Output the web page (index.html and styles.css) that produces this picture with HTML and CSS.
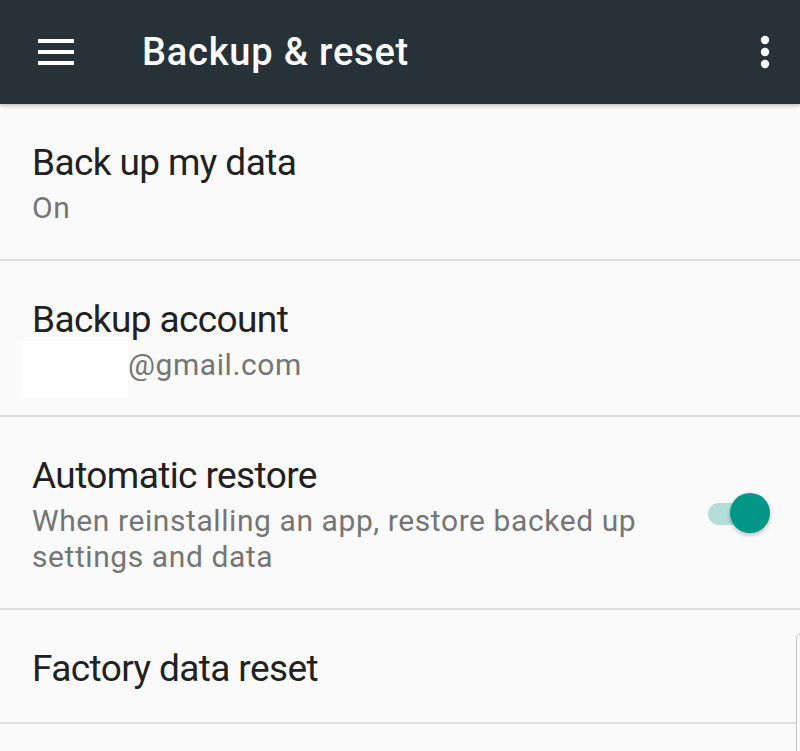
FILE: index.html
```html
<!DOCTYPE html>
<html lang="en">
<head>
<meta charset="utf-8">
<title>Backup &amp; reset</title>
<link rel="stylesheet" href="styles.css">
</head>
<body>
<header class="appbar">
  <svg class="menu" width="36" height="26" viewBox="0 0 36 26" aria-hidden="true">
    <rect x="0" y="0" width="36" height="4" fill="#fff"/>
    <rect x="0" y="11" width="36" height="4" fill="#fff"/>
    <rect x="0" y="22" width="36" height="4" fill="#fff"/>
  </svg>
  <h1 class="title">Backup &amp; reset</h1>
  <svg class="more" width="10" height="34" viewBox="0 0 10 34" aria-hidden="true">
    <circle cx="5" cy="5" r="4.2" fill="#fff"/>
    <circle cx="5" cy="17" r="4.2" fill="#fff"/>
    <circle cx="5" cy="29" r="4.2" fill="#fff"/>
  </svg>
</header>
<main class="list">
  <div class="row row-1">
    <div class="text">
      <div class="primary">Back up my data</div>
      <div class="secondary">On</div>
    </div>
  </div>
  <div class="row row-2">
    <div class="text">
      <div class="primary">Backup account</div>
      <div class="secondary email"><span class="redact"></span>@gmail.com</div>
    </div>
  </div>
  <div class="row row-3">
    <div class="text">
      <div class="primary">Automatic restore</div>
      <div class="secondary">When reinstalling an app, restore backed up<br>settings and data</div>
    </div>
    <svg class="switch" width="64" height="46" viewBox="0 0 64 46" aria-hidden="true">
      <rect x="0" y="12" width="56" height="22" rx="11" fill="#b5ded9"/>
      <circle class="thumb" cx="42" cy="22" r="20" fill="#009688"/>
    </svg>
  </div>
  <div class="row row-4">
    <div class="text">
      <div class="primary">Factory data reset</div>
    </div>
  </div>
  <div class="edge"></div>
</main>
</body>
</html>
```
FILE: styles.css
```css
html, body {
  margin: 0;
  padding: 0;
}
body {
  background: #fafafa;
  font-family: Roboto, "Noto Sans", "Liberation Sans", sans-serif;
  width: 800px;
  height: 751px;
  overflow: hidden;
  position: relative;
}
.appbar {
  height: 104px;
  background: #263238;
  display: flex;
  align-items: center;
  padding-left: 38px;
  padding-right: 30px;
  box-sizing: border-box;
  box-shadow: 0 2px 4px rgba(0, 0, 0, 0.22);
  position: relative;
  z-index: 1;
}
.menu {
  display: block;
  flex: none;
}
.title {
  margin: 0 0 0 68px;
  flex: 1;
  font-size: 38px;
  font-weight: 500;
  color: #fff;
  line-height: 44px;
  letter-spacing: 0.8px;
}
.more {
  display: block;
  flex: none;
}
.list {
  display: flex;
  flex-direction: column;
}
.row {
  box-sizing: border-box;
  border-bottom: 2px solid #dedede;
  padding: 36px 30px 0 32px;
  display: flex;
  align-items: flex-start;
}
.row-1 { height: 157px; }
.row-2 { height: 156px; }
.row-3 { height: 193px; align-items: center; padding-top: 3px; }
.row-4 { height: 114px; }
.text {
  flex: 1;
}
.primary {
  font-size: 37px;
  line-height: 46px;
  color: #212121;
  letter-spacing: -0.6px;
}
.secondary {
  font-size: 30px;
  line-height: 36px;
  color: #757575;
  margin-top: 4px;
  letter-spacing: 0.58px;
}
.email {
  position: relative;
  padding-left: 96px;
}
.redact {
  position: absolute;
  left: -10px;
  top: -6px;
  width: 106px;
  height: 57px;
  background: #ffffff;
}
.switch {
  display: block;
  flex: none;
  margin-right: -2px;
  margin-top: -1px;
}
.thumb {
  filter: drop-shadow(0 2px 2px rgba(0, 0, 0, 0.25));
}
.edge {
  position: absolute;
  left: 796px;
  top: 632px;
  width: 14px;
  height: 140px;
  border: 1.5px solid #c6c6c6;
  border-radius: 7px;
  background: #fafafa;
}
```
